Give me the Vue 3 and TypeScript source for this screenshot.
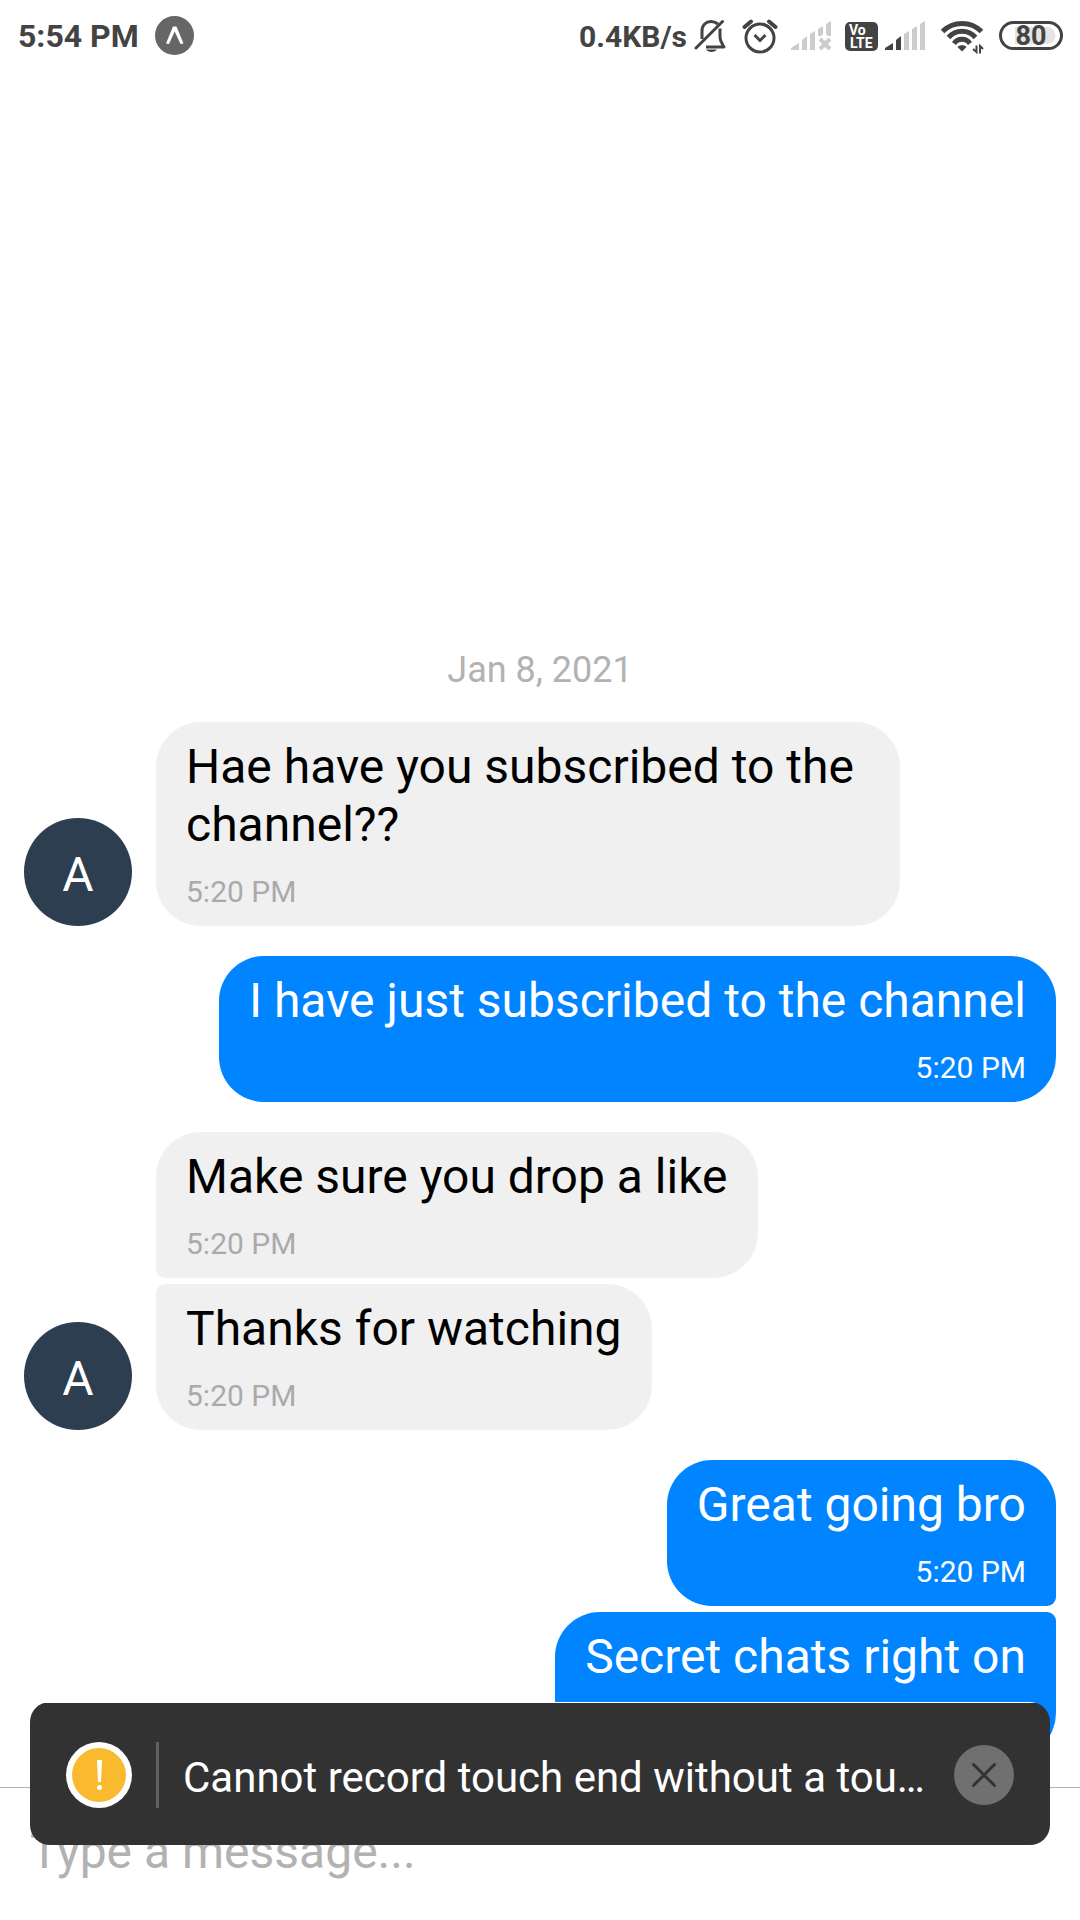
<script setup lang="ts">
import { computed, ref } from 'vue'

interface Message {
  id: number
  text: string
  time: string
  own: boolean
}

const messages: Message[] = [
  { id: 1, text: 'Hae have you subscribed to the channel??', time: '5:20 PM', own: false },
  { id: 2, text: 'I have just subscribed to the channel', time: '5:20 PM', own: true },
  { id: 3, text: 'Make sure you drop a like', time: '5:20 PM', own: false },
  { id: 4, text: 'Thanks for watching', time: '5:20 PM', own: false },
  { id: 5, text: 'Great going bro', time: '5:20 PM', own: true },
  { id: 6, text: 'Secret chats right on', time: '5:20 PM', own: true },
]

const rows = computed(() =>
  messages.map((m, i) => ({
    ...m,
    joinsPrevious: messages[i - 1]?.own === m.own,
    joinsNext: messages[i + 1]?.own === m.own,
  })),
)

const signalBars = [
  'M0 32 L8 27 V34 H0 Z',
  'M11 24 L16 20 V34 H11 Z',
  'M19 18 L24 15 V34 H19 Z',
  'M27 13 L32 10 V34 H27 Z',
  'M35 8 L40 5 V34 H35 Z',
]

const draft = ref('')
const warningVisible = ref(true)
</script>

<template>
  <div class="screen">
    <header class="status">
      <span class="clock">5:54 PM</span>
      <svg class="expo" width="40" height="40" viewBox="0 0 40 40" aria-hidden="true">
        <circle cx="19.5" cy="19.5" r="19.5" fill="#666" />
        <path d="M11 27.500 L18 10.500 H21.500 L28.500 27.500 L25.500 28 L19.700 15.500 L14 28 Z" fill="#fff" />
      </svg>
      <div class="indicators">
        <span class="speed">0.4KB/s</span>
        <svg width="41" height="40" viewBox="-1 0 41 40" fill="none" stroke="#434343" stroke-width="3" aria-hidden="true">
          <path d="M7 23 V15 C7 9 11 5.500 16 5.500 C19 5.500 21 6.500 23 8" />
          <path d="M25 12.500 V21 C25 25 27 27 29 31 H11" stroke-linejoin="round" />
          <path d="M1 32 L27.500 5.500" stroke-linecap="round" />
          <path d="M11 33.500 H22 C20 36.800 13 36.800 11 33.500 Z" fill="#434343" stroke="none" />
        </svg>
        <svg width="42" height="40" viewBox="0 0 42 40" fill="none" stroke="#434343" stroke-width="3" aria-hidden="true">
          <circle cx="18" cy="22" r="14" />
          <path d="M12.500 19 L18 24.500 L23.500 19" />
          <path d="M2.500 11 L9 5.500 M27 5.500 L33.500 11" stroke-width="4" stroke-linecap="round" />
        </svg>
        <svg width="47" height="40" viewBox="0 0 47 40" fill="#ccc" aria-hidden="true">
          <path v-for="bar in signalBars.slice(0, 3)" :key="bar" :d="bar" />
          <path d="M27 13 L32 10 V18 L30 20 H27 Z M35 8 L40 5 V20 H37 L35 18 Z" />
          <path d="M29 23 L39 33 M39 23 L29 33" stroke="#ccc" stroke-width="4" />
        </svg>
        <svg width="33" height="40" viewBox="0 0 33 40" aria-label="VoLTE">
          <rect y="6" width="33" height="29" rx="5" fill="#434343" />
          <text class="volte" x="4" y="19">Vo</text>
          <text class="volte" x="5" y="32">LTE</text>
        </svg>
        <svg width="49" height="40" viewBox="0 0 49 40" aria-hidden="true">
          <path v-for="(bar, i) in signalBars" :key="bar" :d="bar" :fill="i < 2 ? '#434343' : '#ccc'" />
        </svg>
        <svg width="51" height="40" viewBox="0 0 51 40" fill="none" stroke="#434343" stroke-width="5" aria-hidden="true">
          <path d="M1.500 15.500 C12 4.700 30 4.700 40.500 15.500" />
          <path d="M7.500 21.500 C15 13.200 27 13.200 34.500 21.500" />
          <path d="M13 27.500 C17 21.800 25 21.800 29 27.500" />
          <path d="M16.500 31 C18 28.500 24 28.500 25.500 31 L21 35.500 Z" fill="#434343" stroke="none" />
          <path d="M35.500 29.500 V36 L32 33 M39 37.500 V30 L42 33" stroke-width="2" />
        </svg>
        <svg width="64" height="40" viewBox="0 0 64 40" aria-label="Battery 80%">
          <rect x="1.500" y="6.500" width="61" height="26" rx="13" fill="none" stroke="#434343" stroke-width="3" />
          <path d="M16 11 H48 A8.500 8.500 0 0 1 48 28 H16 Z" fill="#e4e4e4" />
          <text class="level" x="32" y="29" text-anchor="middle">80</text>
        </svg>
      </div>
    </header>

    <main class="thread">
      <time class="day" datetime="2021-01-08">Jan 8, 2021</time>
      <article
        v-for="row in rows"
        :key="row.id"
        class="row"
        :class="{ own: row.own, 'joins-previous': row.joinsPrevious, 'joins-next': row.joinsNext }"
      >
        <div v-if="!row.own" class="avatar-slot">
          <div v-if="!row.joinsNext" class="avatar">A</div>
        </div>
        <div class="bubble">
          <p class="text">{{ row.text }}</p>
          <time class="time">{{ row.time }}</time>
        </div>
      </article>
    </main>

    <form class="composer" @submit.prevent="draft = ''">
      <input v-model="draft" class="field" type="text" placeholder="Type a message..." aria-label="Message" />
    </form>

    <aside v-if="warningVisible" class="toast" role="alert">
      <svg class="warning" width="66" height="66" viewBox="0 0 66 66" aria-hidden="true">
        <circle cx="33" cy="33" r="33" fill="#fff" />
        <circle cx="33" cy="33" r="27" fill="#f9ba30" />
        <path d="M31 18 H36 L35 40 H32 Z" fill="#fff" />
        <circle cx="33.500" cy="45.500" r="2.500" fill="#fff" />
      </svg>
      <span class="divider"></span>
      <p class="notice">Cannot record touch end without a tou…</p>
      <button class="close" type="button" aria-label="Dismiss" @click="warningVisible = false">
        <svg width="60" height="60" viewBox="0 0 60 60" aria-hidden="true">
          <path d="M19.500 19.500 L40.500 40.500 M40.500 19.500 L19.500 40.500" stroke="#323232" stroke-width="3" stroke-linecap="round" />
        </svg>
      </button>
    </aside>
  </div>
</template>

<style>
body {
  margin: 0;
  background: #fff;
}
</style>

<style scoped>
.screen {
  display: flex;
  flex-direction: column;
  min-height: 100vh;
  background: #fff;
  font-family: Roboto, 'Liberation Sans', sans-serif;
  color: #000;
}

.status {
  display: flex;
  align-items: center;
  height: 72px;
  padding: 0 17px 0 18px;
  color: #434343;
  font-weight: 700;
}

.clock {
  font-size: 32px;
}

.expo {
  margin-left: 16px;
}

.indicators {
  display: flex;
  align-items: center;
  gap: 7px;
  margin-left: auto;
}

.indicators svg {
  flex: none;
}

.speed {
  font-size: 30px;
}

.volte {
  fill: #fff;
  font-size: 14px;
  font-weight: 700;
}

.level {
  fill: #434343;
  font-size: 27px;
  font-weight: 700;
}

.thread {
  display: flex;
  flex: 1;
  flex-direction: column;
  justify-content: flex-end;
  padding: 0 24px 29px;
}

.day {
  margin-bottom: 30px;
  color: #b2b2b2;
  font-size: 36px;
  line-height: 44px;
  text-align: center;
}

.row {
  display: flex;
  align-items: flex-end;
  margin-right: 156px;
}

.row + .row {
  margin-top: 30px;
}

.row + .joins-previous {
  margin-top: 6px;
}

.own {
  justify-content: flex-end;
  margin-right: 0;
  margin-left: 156px;
}

.avatar-slot {
  flex: none;
  width: 108px;
  margin-right: 24px;
}

.avatar {
  box-sizing: border-box;
  height: 108px;
  padding-top: 5px;
  border-radius: 50%;
  background: #2c3e50;
  color: #fff;
  font-size: 48px;
  line-height: 104px;
  text-align: center;
}

.bubble {
  display: flex;
  flex-direction: column;
  padding: 16px 30px;
  border-radius: 45px;
  background: #f0f0f0;
}

.own .bubble {
  background: #0084ff;
  color: #fff;
}

.joins-next .bubble {
  border-bottom-left-radius: 9px;
}

.joins-previous .bubble {
  border-top-left-radius: 9px;
}

.own.joins-next .bubble {
  border-bottom-left-radius: 45px;
  border-bottom-right-radius: 9px;
}

.own.joins-previous .bubble {
  border-top-left-radius: 45px;
  border-top-right-radius: 9px;
}

.text {
  margin: 0 0 20px;
  font-size: 48px;
  line-height: 58px;
}

.time {
  color: #aaa;
  font-size: 30px;
  line-height: 36px;
}

.own .time {
  color: #fff;
  text-align: right;
}

.composer {
  display: flex;
  padding: 35px 30px 39px;
  border-top: 1px solid #b2b2b2;
}

.field {
  flex: 1;
  min-width: 0;
  height: 58px;
  padding: 0;
  border: 0;
  outline: 0;
  background: transparent;
  color: #000;
  font: 48px/58px Roboto, 'Liberation Sans', sans-serif;
}

.field::placeholder {
  color: #b2b2b2;
  opacity: 1;
}

.toast {
  position: fixed;
  right: 30px;
  bottom: 75px;
  left: 30px;
  display: flex;
  align-items: center;
  gap: 24px;
  box-sizing: border-box;
  height: 143px;
  padding: 3px 36px 0;
  border-radius: 20px;
  background: linear-gradient(#fff 1px, #323232 1px);
}

.warning,
.divider,
.close {
  flex: none;
}

.divider {
  width: 3px;
  height: 66px;
  background: #606060;
}

.notice {
  flex: 1;
  min-width: 0;
  margin: 0;
  padding-top: 6px;
  overflow: hidden;
  color: #fff;
  font-size: 42px;
  line-height: 50px;
  text-overflow: ellipsis;
  white-space: nowrap;
}

.close {
  width: 60px;
  height: 60px;
  padding: 0;
  border: 0;
  border-radius: 50%;
  background: #707070;
  cursor: pointer;
}

.close svg {
  display: block;
}
</style>
